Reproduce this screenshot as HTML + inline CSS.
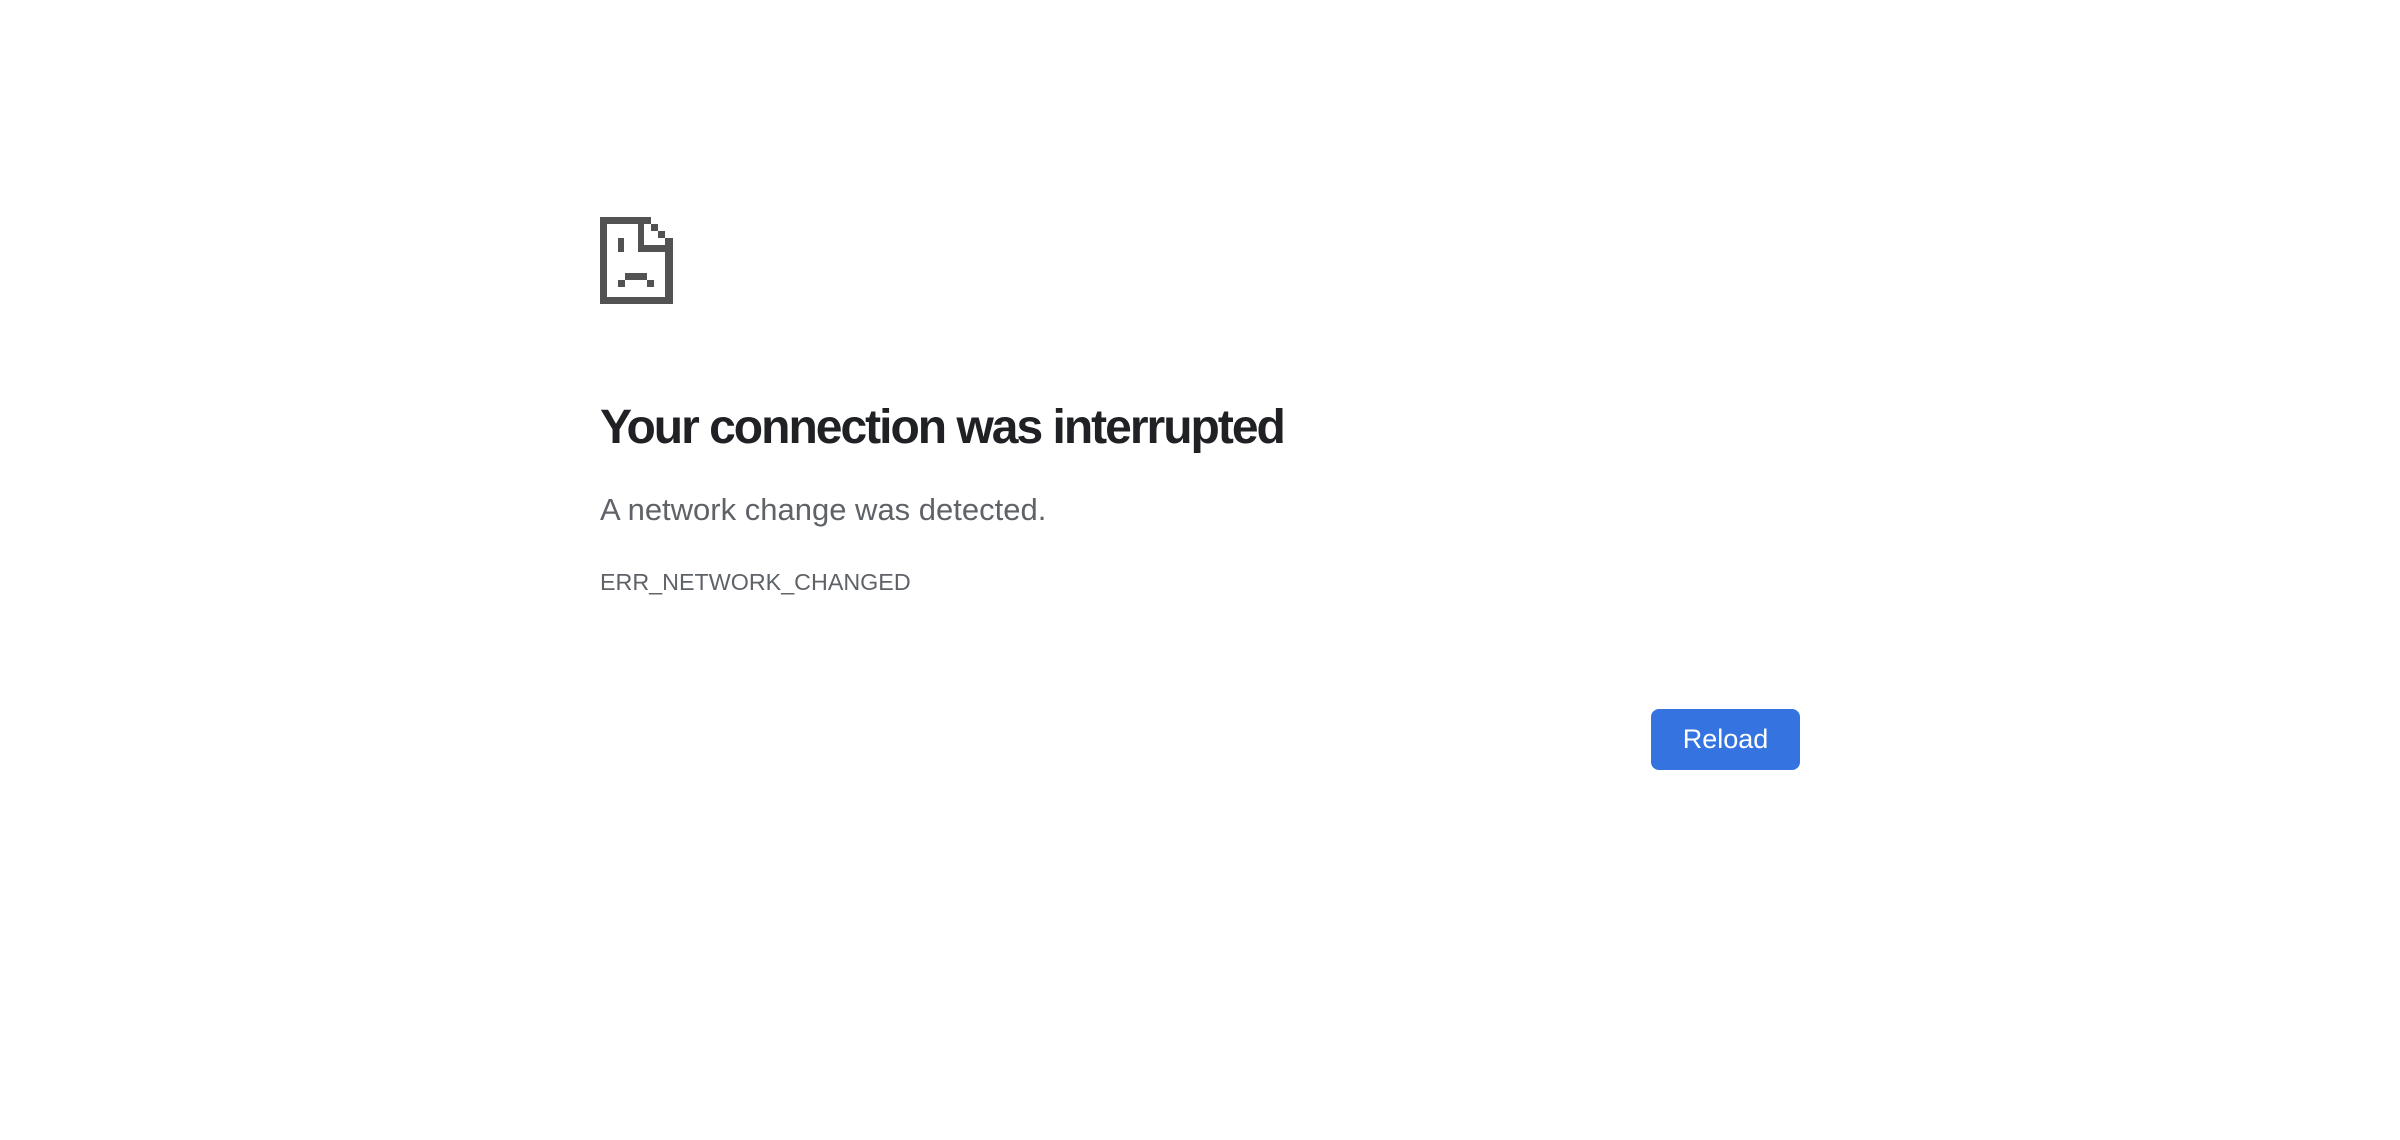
<!DOCTYPE html>
<html><head><meta charset="utf-8"><style>
html,body{margin:0;padding:0;background:#fff;width:2400px;height:1140px;overflow:hidden;font-family:"Liberation Sans",Arial,sans-serif;}
.a{position:absolute;white-space:nowrap;}
#h{left:600px;top:400px;font-size:48px;line-height:56px;color:#202124;font-weight:bold;letter-spacing:-2px;}
#s{left:600px;top:493px;font-size:31px;line-height:34px;color:#5f6368;}
#e{left:600px;top:568px;font-size:23.3px;line-height:28px;color:#5f6368;}
#b{left:1651px;top:709px;width:149px;height:61px;background:#3574e0;border-radius:8px;color:#fff;font-size:27px;line-height:61px;text-align:center;}
</style></head><body>
<svg class="a" style="left:0;top:0" width="2400" height="1140" fill="#525252">
<rect x="600" y="217" width="7" height="87"/>
<rect x="600" y="217" width="51" height="7"/>
<rect x="651" y="224" width="7" height="7"/>
<rect x="658" y="231" width="7" height="7"/>
<rect x="665" y="238" width="8" height="66"/>
<rect x="600" y="297" width="73" height="7"/>
<rect x="638" y="224" width="6" height="28"/>
<rect x="638" y="245" width="35" height="7"/>
<rect x="618" y="238" width="6" height="14"/>
<rect x="625" y="273" width="22" height="7"/>
<rect x="618" y="280" width="7" height="7"/>
<rect x="647" y="280" width="7" height="7"/>
</svg>
<div class="a" id="h">Your connection was interrupted</div>
<div class="a" id="s">A network change was detected.</div>
<div class="a" id="e">ERR_NETWORK_CHANGED</div>
<div class="a" id="b">Reload</div>
</body></html>
